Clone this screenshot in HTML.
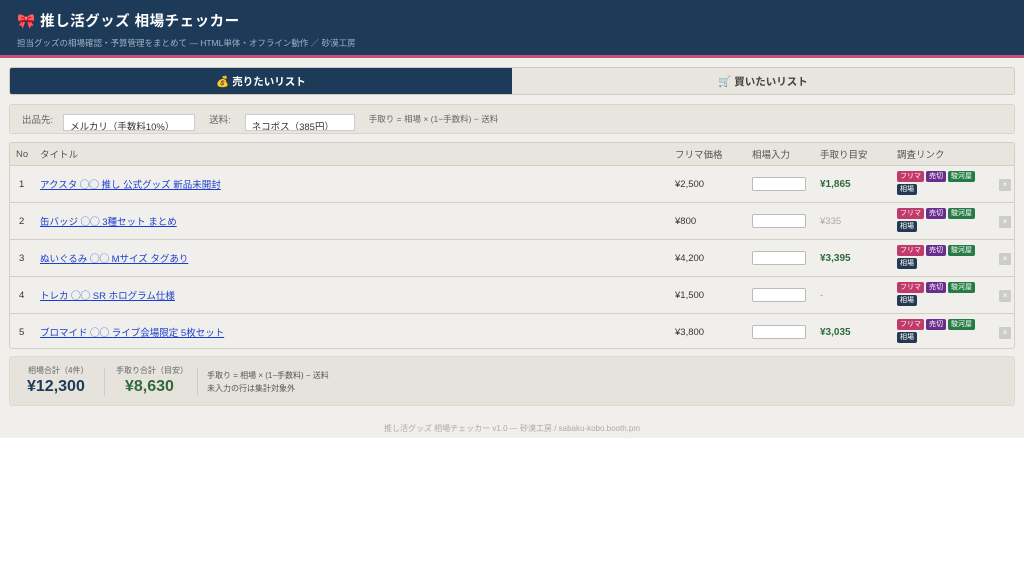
<!DOCTYPE html><html><head><meta charset="utf-8"><style>
*{box-sizing:border-box;margin:0;padding:0}
body{width:1024px;height:580px;background:#fff;font-family:"Liberation Sans","Noto Sans CJK JP",sans-serif;color:#333;font-size:9.5px}
#wrap{height:438px;background:#f1efeb;position:relative}
.hd{background:#1d3a58;padding:10px 17px;color:#fff;border-bottom:3px solid #c8507a;height:58px}
.hd h1{font-size:14.5px;font-weight:bold;letter-spacing:.5px}
.hd p{font-size:8.5px;color:#9fb0c4;margin-top:6px}
.tabs{position:absolute;left:9px;top:67px;width:1006px;height:28px;display:flex;border:1px solid #cfcac2;border-radius:3px;overflow:hidden}
.tabs div{flex:1;display:flex;align-items:center;justify-content:center;font-weight:bold;font-size:10.5px}
.t1{background:#1d3a58;color:#fff}.t2{background:#e8e5df;color:#444}
.flt{position:absolute;left:9px;top:104px;width:1006px;height:30px;background:#e8e5df;border:1px solid #d8d3cb;border-radius:3px;display:flex;align-items:center;color:#666;font-size:9.5px}
.inp{background:#fff;border:1px solid #ccc;height:17px;margin-top:6px;overflow:hidden;font-size:9.5px;padding:8px 6px 0;color:#333;line-height:9px}
.tbl{position:absolute;left:9px;top:142px;width:1006px;height:207px;border:1px solid #d3cec6;border-radius:3px;overflow:hidden;background:#f1efeb}
.row{position:absolute;left:0;width:100%;border-top:1px solid #d3cec6}
.th{top:0;height:22px;background:#e8e5df;border:none;color:#555}
.c{position:absolute;top:0;height:100%;display:flex;align-items:center}
a{color:#1a3fd0;text-decoration:underline}
.g{color:#2e6b3a;font-weight:bold;font-size:10px}
.box{width:54px;height:14px;background:#fff;border:1px solid #bbb;border-radius:2px}
.tg{display:inline-block;color:#fff;font-size:7px;padding:1px 3px;border-radius:2px;margin:0 2px 2px 0;line-height:9px}
.x{position:absolute;left:989px;width:12px;height:12px;background:#ccc;color:#fff;font-size:8px;text-align:center;line-height:12px;border-radius:1px}
.sum{position:absolute;left:9px;top:356px;width:1006px;height:50px;background:#e6e3dd;border-radius:3px;border:1px solid #ddd8d0}
.ft{position:absolute;top:423px;width:100%;text-align:center;color:#aaa;font-size:8px}
</style></head><body><div id="wrap">
<div class="hd"><h1><span style="color:#e0609a">🎀</span> 推し活グッズ 相場チェッカー</h1><p>担当グッズの相場確認・予算管理をまとめて — HTML単体・オフライン動作 ／ 砂漠工房</p></div>
<div class="tabs"><div class="t1">💰 売りたいリスト</div><div class="t2">🛒 買いたいリスト</div></div>
<div class="flt"><span style="margin-left:12px">出品先:</span><div class="inp" style="margin-left:10px;width:132px">メルカリ（手数料10%）</div><span style="margin-left:14px">送料:</span><div class="inp" style="margin-left:14px;width:110px">ネコポス（385円）</div><span style="margin-left:14px;font-size:8.5px">手取り = 相場 × (1−手数料) − 送料</span></div>
<div class="tbl">
<div class="row th"><span class="c" style="left:6px">No</span><span class="c" style="left:30px">タイトル</span><span class="c" style="left:665px">フリマ価格</span><span class="c" style="left:742px">相場入力</span><span class="c" style="left:810px">手取り目安</span><span class="c" style="left:887px">調査リンク</span></div>
<div class="row" style="top:22px;height:37px"><span class="c" style="left:9px">1</span><span class="c" style="left:30px"><a>アクスタ ◯◯ 推し 公式グッズ 新品未開封</a></span><span class="c" style="left:665px">¥2,500</span><span class="c" style="left:742px"><span class="box"></span></span><span class="c g" style="left:810px">¥1,865</span><span class="c" style="left:887px;width:92px;flex-wrap:wrap;align-content:center"><span class="tg" style="background:#c03a6a">フリマ</span><span class="tg" style="background:#6a2d8c">売切</span><span class="tg" style="background:#257a45">駿河屋</span><span class="tg" style="background:#243a52">相場</span></span><span class="x" style="top:13px">×</span></div>
<div class="row" style="top:59px;height:37px"><span class="c" style="left:9px">2</span><span class="c" style="left:30px"><a>缶バッジ ◯◯ 3種セット まとめ</a></span><span class="c" style="left:665px">¥800</span><span class="c" style="left:742px"><span class="box"></span></span><span class="c" style="left:810px;color:#aaa">¥335</span><span class="c" style="left:887px;width:92px;flex-wrap:wrap;align-content:center"><span class="tg" style="background:#c03a6a">フリマ</span><span class="tg" style="background:#6a2d8c">売切</span><span class="tg" style="background:#257a45">駿河屋</span><span class="tg" style="background:#243a52">相場</span></span><span class="x" style="top:13px">×</span></div>
<div class="row" style="top:96px;height:37px"><span class="c" style="left:9px">3</span><span class="c" style="left:30px"><a>ぬいぐるみ ◯◯ Mサイズ タグあり</a></span><span class="c" style="left:665px">¥4,200</span><span class="c" style="left:742px"><span class="box"></span></span><span class="c g" style="left:810px">¥3,395</span><span class="c" style="left:887px;width:92px;flex-wrap:wrap;align-content:center"><span class="tg" style="background:#c03a6a">フリマ</span><span class="tg" style="background:#6a2d8c">売切</span><span class="tg" style="background:#257a45">駿河屋</span><span class="tg" style="background:#243a52">相場</span></span><span class="x" style="top:13px">×</span></div>
<div class="row" style="top:133px;height:37px"><span class="c" style="left:9px">4</span><span class="c" style="left:30px"><a>トレカ ◯◯ SR ホログラム仕様</a></span><span class="c" style="left:665px">¥1,500</span><span class="c" style="left:742px"><span class="box"></span></span><span class="c" style="left:810px;color:#999">-</span><span class="c" style="left:887px;width:92px;flex-wrap:wrap;align-content:center"><span class="tg" style="background:#c03a6a">フリマ</span><span class="tg" style="background:#6a2d8c">売切</span><span class="tg" style="background:#257a45">駿河屋</span><span class="tg" style="background:#243a52">相場</span></span><span class="x" style="top:13px">×</span></div>
<div class="row" style="top:170px;height:37px"><span class="c" style="left:9px">5</span><span class="c" style="left:30px"><a>ブロマイド ◯◯ ライブ会場限定 5枚セット</a></span><span class="c" style="left:665px">¥3,800</span><span class="c" style="left:742px"><span class="box"></span></span><span class="c g" style="left:810px">¥3,035</span><span class="c" style="left:887px;width:92px;flex-wrap:wrap;align-content:center"><span class="tg" style="background:#c03a6a">フリマ</span><span class="tg" style="background:#6a2d8c">売切</span><span class="tg" style="background:#257a45">駿河屋</span><span class="tg" style="background:#243a52">相場</span></span><span class="x" style="top:13px">×</span></div>
</div>
<div class="sum">
<div style="position:absolute;left:18px;top:8px;color:#666;font-size:8px">相場合計（4件）</div>
<div style="position:absolute;left:17px;top:21px;color:#1d3a58;font-size:16px;font-weight:bold">¥12,300</div>
<div style="position:absolute;left:94px;top:11px;width:1px;height:28px;background:#ccc"></div>
<div style="position:absolute;left:106px;top:8px;color:#666;font-size:8px">手取り合計（目安）</div>
<div style="position:absolute;left:115px;top:21px;color:#2e6b3a;font-size:16px;font-weight:bold">¥8,630</div>
<div style="position:absolute;left:187px;top:11px;width:1px;height:28px;background:#ccc"></div>
<div style="position:absolute;left:197px;top:12px;color:#555;font-size:8px;line-height:13px">手取り = 相場 × (1−手数料) − 送料<br>未入力の行は集計対象外</div>
</div>
<div class="ft">推し活グッズ 相場チェッカー v1.0 — 砂漠工房 / sabaku-kobo.booth.pm</div>
</div></body></html>
